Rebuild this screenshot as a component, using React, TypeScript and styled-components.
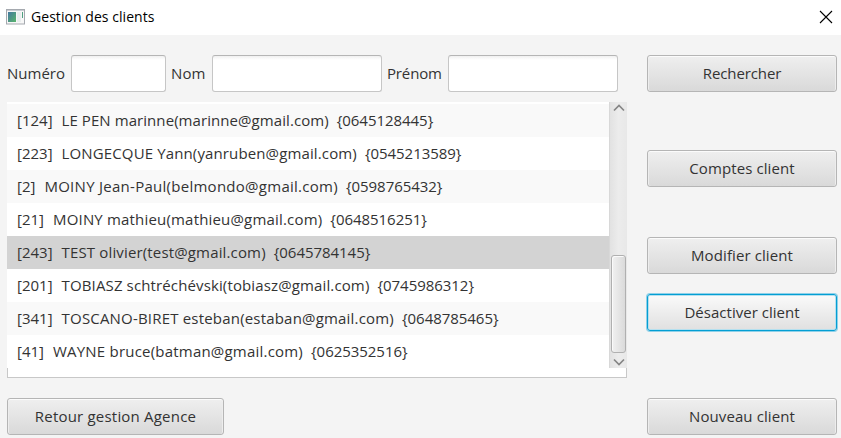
import React from 'react';
import styled, { createGlobalStyle, css } from 'styled-components';

const GlobalStyle = createGlobalStyle`
  * { box-sizing: border-box; }
  html, body { margin: 0; padding: 0; }
  body { background: #f4f4f4; overflow: hidden; }
`;

const Window = styled.div`
  width: 841px;
  height: 438px;
  display: flex;
  flex-direction: column;
  background: #f4f4f4;
  color: #333;
  font: 15px/20px 'Open Sans', 'Noto Sans', sans-serif;
  overflow: hidden;
`;

const TitleBar = styled.header`
  height: 35px;
  flex: none;
  display: flex;
  align-items: center;
  padding: 0 8px 2px 6px;
  background: #fff;
  color: #000;
`;

const Title = styled.h1`
  flex: 1;
  margin: 0 0 0 6px;
  font-size: 14px;
  font-weight: 400;
  letter-spacing: 0.05px;
`;

const CloseButton = styled.button`
  width: 14px;
  height: 14px;
  padding: 0;
  border: 0;
  background: none;
  display: flex;
`;

const Content = styled.main`
  flex: 1;
  display: grid;
  grid-template-columns: 620px 190px;
  column-gap: 20px;
  padding: 20px 4px 3px 7px;
`;

const Main = styled.section`
  display: flex;
  flex-direction: column;
  align-items: flex-start;
`;

const Actions = styled.aside`
  display: flex;
  flex-direction: column;
`;

const SearchBar = styled.form`
  display: flex;
  align-items: center;
  height: 37px;
  margin-bottom: 10px;
`;

const Label = styled.label<{ $width: number; $tracking?: number }>`
  width: ${p => p.$width}px;
  padding-bottom: 2px;
  letter-spacing: ${p => p.$tracking ?? 0}px;
  white-space: nowrap;
`;

const Field = styled.input<{ $width: number; $gap?: number }>`
  width: ${p => p.$width}px;
  height: 37px;
  margin: 0 ${p => p.$gap ?? 0}px 0 0;
  padding: 0 8px;
  border: 1px solid #c6c6c6;
  border-top-color: #b5b5b5;
  border-radius: 3px;
  background: linear-gradient(#f0f0f0, #fff 4px);
  font: inherit;
  outline: none;
`;

const Button = styled.button<{ $top?: number; $focused?: boolean; $width?: number; $tracking?: number }>`
  flex: none;
  width: ${p => p.$width ?? 190}px;
  height: 37px;
  margin: ${p => p.$top ?? 0}px 0 0;
  padding: 0 0 2px;
  border: 1px solid #b5b5b5;
  border-radius: 3px;
  background: linear-gradient(#efefef, #d9d9d9);
  box-shadow: inset 0 1px #fbfbfb, inset 1px 0 #ededed, inset -1px 0 #ededed;
  color: #333;
  font: inherit;
  letter-spacing: ${p => p.$tracking ?? 0.1}px;
  ${p => p.$focused && css`
    border-color: #039ed3;
    background: linear-gradient(#fafafa, #e0e0e0);
    box-shadow: 0 0 0 1px #8fd0e8, inset 0 0 0 1px #b5e0ef;
  `}
`;

const ListView = styled.div`
  width: 620px;
  height: 276px;
  background: #fff;
  border-bottom: 1px solid #c8c8c8;
`;

const ListBody = styled.div`
  display: flex;
  height: 266px;
`;

const ListFooter = styled.div`
  height: 9px;
  border: solid #c8c8c8;
  border-width: 0 1px;
`;

const Rows = styled.ul`
  flex: 1;
  margin: 0;
  padding: 2px 0 0;
  list-style: none;
`;

const Row = styled.li<{ $selected?: boolean }>`
  height: 33px;
  display: flex;
  align-items: center;
  padding: 0 0 2px 10px;
  white-space: pre;
  background: #fff;
  &:nth-child(odd) { background: #f9f9f9; }
  ${p => p.$selected && css`&&:nth-child(n) { background: #d3d3d3; }`}
`;

const ClientId = styled.span`
  margin-right: 9px;
`;

const ClientName = styled.span<{ $tracking: number }>`
  margin-right: 8px;
  letter-spacing: ${p => p.$tracking}px;
`;

const Phone = styled.span`
  letter-spacing: -0.04px;
`;

const ScrollBar = styled.div`
  width: 18px;
  display: flex;
  flex-direction: column;
  align-items: center;
  justify-content: space-between;
  padding: 2px 0 2px 1px;
  border-left: 1px solid #d8d8d8;
  background: linear-gradient(90deg, #e2e2e2, #ececec 50%, #e8e8e8);
`;

const ScrollTrack = styled.div`
  flex: 1;
  align-self: stretch;
  display: flex;
  align-items: flex-end;
  padding: 0 1px 5px 0;
`;

const ScrollThumb = styled.div`
  width: 15px;
  height: 98px;
  border: 1px solid #b0b0b0;
  border-radius: 3px;
  background: linear-gradient(90deg, #f1f1f1, #dadada);
  box-shadow: inset 1px 1px #fafafa;
`;

const clients = [
  { id: '124', name: 'LE PEN marinne(marinne@gmail.com)', phone: '0645128445', tracking: 0.07 },
  { id: '223', name: 'LONGECQUE Yann(yanruben@gmail.com)', phone: '0545213589', tracking: 0.13 },
  { id: '2', name: 'MOINY Jean-Paul(belmondo@gmail.com)', phone: '0598765432', tracking: 0.27 },
  { id: '21', name: 'MOINY mathieu(mathieu@gmail.com)', phone: '0648516251', tracking: 0.18 },
  { id: '243', name: 'TEST olivier(test@gmail.com)', phone: '0645784145', tracking: 0.15 },
  { id: '201', name: 'TOBIASZ schtréchévski(tobiasz@gmail.com)', phone: '0745986312', tracking: 0.13 },
  { id: '341', name: 'TOSCANO-BIRET esteban(estaban@gmail.com)', phone: '0648785465', tracking: 0.19 },
  { id: '41', name: 'WAYNE bruce(batman@gmail.com)', phone: '0625352516', tracking: 0.21 },
];

const AppIcon = () => (
  <svg width="19" height="16" viewBox="0 0 19 16">
    <defs>
      <linearGradient id="pane" x1="0" y1="0" x2="1" y2="1">
        <stop offset="0" stopColor="#4478a0" />
        <stop offset="1" stopColor="#59b56b" />
      </linearGradient>
    </defs>
    <rect x=".5" y=".5" width="18" height="14.5" fill="#f7f7f7" stroke="#a5a9af" />
    <path d="M1 1.5h17" stroke="#c9ccd2" />
    <rect x="2" y="3" width="8" height="10" fill="url(#pane)" />
    <path d="M11 3h4v10h-4z" fill="#e9eded" />
    <path d="M16.5 3v6" stroke="#4f9f80" />
  </svg>
);

const Chevron = ({ down = false }: { down?: boolean }) => (
  <svg width="12" height="8" viewBox="0 0 12 8" fill="none" stroke="#858585" strokeWidth="1.7">
    <path d={down ? 'M1 1.5 6 6.5 11 1.5' : 'M1 6.5 6 1.5 11 6.5'} />
  </svg>
);

export default function App() {
  return (
    <>
      <GlobalStyle />
      <Window>
        <TitleBar>
          <AppIcon />
          <Title>Gestion des clients</Title>
          <CloseButton aria-label="Fermer">
            <svg width="14" height="14" viewBox="0 0 14 14" stroke="#000" strokeWidth="1.1">
              <path d="M1 1 13 13M13 1 1 13" />
            </svg>
          </CloseButton>
        </TitleBar>
        <Content>
          <Main>
            <SearchBar>
              <Label $width={64}>Numéro</Label>
              <Field $width={95} $gap={5} />
              <Label $width={41} $tracking={0.1}>Nom</Label>
              <Field $width={170} $gap={5} />
              <Label $width={61} $tracking={-0.15}>Prénom</Label>
              <Field $width={170} />
            </SearchBar>
            <ListView>
              <ListBody>
                <Rows>
                  {clients.map(c => (
                    <Row key={c.id} $selected={c.id === '243'}>
                      <ClientId>[{c.id}]</ClientId>
                      <ClientName $tracking={c.tracking}>{c.name}</ClientName>
                      <Phone>{`{${c.phone}}`}</Phone>
                    </Row>
                  ))}
                </Rows>
                <ScrollBar>
                  <Chevron />
                  <ScrollTrack><ScrollThumb /></ScrollTrack>
                  <Chevron down />
                </ScrollBar>
              </ListBody>
              <ListFooter />
            </ListView>
            <Button $width={217} $top={20} $tracking={0.2}>Retour gestion Agence</Button>
          </Main>
          <Actions>
            <Button $tracking={-0.1}>Rechercher</Button>
            <Button $top={58}>Comptes client</Button>
            <Button $top={50}>Modifier client</Button>
            <Button $top={20} $tracking={0.02} $focused>Désactiver client</Button>
            <Button $top={67}>Nouveau client</Button>
          </Actions>
        </Content>
      </Window>
    </>
  );
}
